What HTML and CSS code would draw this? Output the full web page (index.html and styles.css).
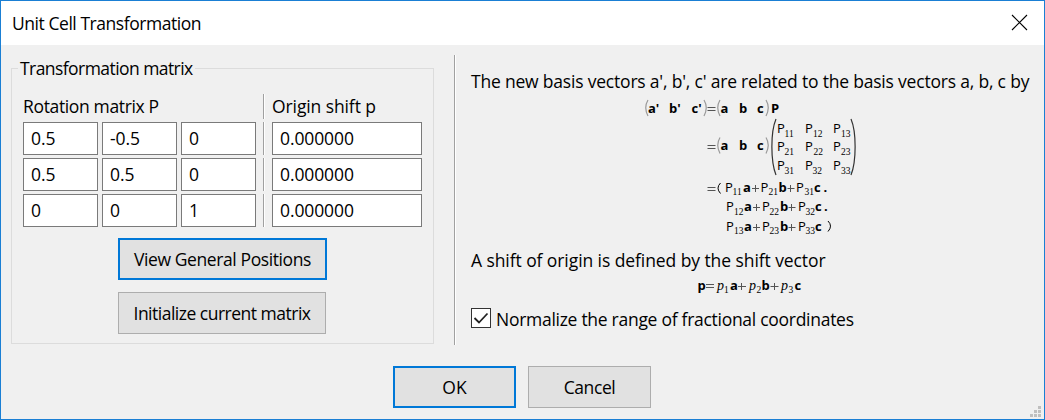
FILE: index.html
```html
<!DOCTYPE html>
<html lang="en">
<head>
<meta charset="utf-8">
<title>Unit Cell Transformation</title>
<link rel="stylesheet" href="styles.css">
</head>
<body>
<div class="dialog">
  <header class="titlebar">
    <span class="title">Unit Cell Transformation</span>
    <svg class="close" width="17" height="17" viewBox="0 0 17 17"><path d="M1 1L16 16M16 1L1 16"/></svg>
  </header>
  <main class="content">
    <fieldset class="group">
      <legend><span class="t-legend">Transformation matrix</span></legend>
      <div class="grid">
        <div class="label rot"><span class="t-rot">Rotation matrix P</span></div><i class="vline short"></i><div class="label"><span class="t-origin">Origin shift p</span></div>
        <input class="cell" value="0.5"><input class="cell" value="-0.5"><input class="cell" value="0"><i class="vline"></i><input class="cell shift" value="0.000000">
        <input class="cell" value="0.5"><input class="cell" value="0.5"><input class="cell" value="0"><i class="vline"></i><input class="cell shift" value="0.000000">
        <input class="cell" value="0"><input class="cell" value="0"><input class="cell" value="1"><i class="vline"></i><input class="cell shift" value="0.000000">
      </div>
      <div class="actions">
        <button class="btn view focus"><span class="t-view">View General Positions</span></button>
        <button class="btn init"><span class="t-init">Initialize current matrix</span></button>
      </div>
    </fieldset>
    <i class="divider"></i>
    <section class="info">
      <p class="line intro"><span class="t-intro">The new basis vectors a', b', c' are related to the basis vectors a, b, c by</span></p>
      <svg class="formula" width="220" height="142" viewBox="640 98 220 142">
        <g class="paren">
          <path d="M648 100Q643.5 107.500 648 116M704 100Q708.500 107.500 704 116M720 100Q715.500 107.500 720 116M766 100Q770.500 107.500 766 116"/>
          <path d="M720 137.500Q715.500 145 720 153.500M766 137.500Q770.500 145 766 153.500"/>
        </g>
        <path class="bigparen" d="M776 119C770.500 132 770.500 161 776 175M851 119C856.500 132 856.500 161 851 175"/>
        <g class="b">
          <text x="648" y="112.500">a'</text>
          <text x="669" y="112.500">b'</text>
          <text x="691.500" y="112.500">c'</text>
          <text x="720.500" y="112.500">a</text><text x="739" y="112.500">b</text><text x="757" y="112.500">c</text><text x="771" y="112.500">P</text>
          <text x="720.500" y="150">a</text><text x="739" y="150">b</text><text x="757" y="150">c</text>
          <text x="743" y="192">a</text><text x="778.500" y="192">b</text><text x="814" y="192">c</text><text x="823.500" y="192">.</text>
          <text x="744" y="211">a</text><text x="780" y="211">b</text><text x="815" y="211">c</text><text x="824" y="211">.</text>
          <text x="744" y="231">a</text><text x="780" y="231">b</text><text x="815" y="231">c</text>
        </g>
        <path class="op" d="M707.500 107.500h8M707.500 110.500h8M707.500 145.500h8M707.500 148.500h8M707.500 187.500h8M707.500 190.500h8M752 188.500h7M755.500 185v7M787.500 188.500h7M790.500 185v7M753 207.500h7M756.500 204v7M788.500 207.500h7M791.500 204v7M753 227.500h7M756.500 224v7M788.500 227.500h7M791.500 224v7"/>
        <path class="round" d="M720.500 183Q715.500 188 720.500 193.500M828 221Q833 226 828 231.500"/>
        <g class="r">
          <text x="777" y="133">P</text><text x="805" y="133">P</text><text x="833" y="133">P</text>
          <text x="777" y="151">P</text><text x="805" y="151">P</text><text x="833" y="151">P</text>
          <text x="777" y="170">P</text><text x="805" y="170">P</text><text x="833" y="170">P</text>
          <text x="725" y="192">P</text><text x="760.500" y="192">P</text><text x="796" y="192">P</text>
          <text x="726" y="211">P</text><text x="762" y="211">P</text><text x="798" y="211">P</text>
          <text x="726" y="231">P</text><text x="762" y="231">P</text><text x="798" y="231">P</text>
        </g>
        <g class="s">
          <text x="784.500" y="136.500">11</text><text x="813" y="136.500">12</text><text x="841" y="136.500">13</text>
          <text x="784.500" y="155">21</text><text x="813.500" y="155">22</text><text x="841" y="155">23</text>
          <text x="784.500" y="173.500">31</text><text x="812.500" y="173.500">32</text><text x="841" y="173.500">33</text>
          <text x="732.500" y="195">11</text><text x="768.500" y="195">21</text><text x="804.500" y="195">31</text>
          <text x="734" y="214.500">12</text><text x="769.500" y="214.500">22</text><text x="805.500" y="214.500">32</text>
          <text x="734" y="234">13</text><text x="769.500" y="234">23</text><text x="805.500" y="234">33</text>
        </g>
      </svg>
      <p class="line shiftline"><span class="t-shift">A shift of origin is defined by the shift vector</span></p>
      <svg class="formula2" width="120" height="20" viewBox="690 278 120 20">
        <g class="b"><text x="697.500" y="290">p</text><text x="730" y="290">a</text><text x="761.500" y="290">b</text><text x="794.500" y="290">c</text></g>
        <path class="op" d="M706 284.500h8M706 287.500h8M738 286.500h8M741.500 283v7M770.500 286.500h8M774.500 283v7"/>
        <g class="i"><text x="717" y="290">p</text><text x="749" y="290">p</text><text x="781" y="290">p</text></g>
        <g class="s"><text x="724" y="293">1</text><text x="756.500" y="293">2</text><text x="788.500" y="293">3</text></g>
      </svg>
      <label class="check">
        <svg width="20" height="20" viewBox="0 0 20 20"><rect x=".5" y=".5" width="19" height="19"/><path d="M3.500 10L8 14.500L16.500 5.500"/></svg>
        <span class="t-norm">Normalize the range of fractional coordinates</span>
      </label>
    </section>
  </main>
  <footer class="footer">
    <button class="btn foot focus"><span class="t-ok">OK</span></button>
    <button class="btn foot"><span class="t-cancel">Cancel</span></button>
    <svg class="grip" width="11" height="11" viewBox="0 0 11 11"><path d="M8 0h3v3h-3zM4 4h3v3h-3zM8 4h3v3h-3zM0 8h3v3h-3zM4 8h3v3h-3zM8 8h3v3h-3z"/></svg>
  </footer>
</div>
</body>
</html>
```
FILE: styles.css
```css
* { box-sizing: border-box; }
body { margin: 0; font: 17.5px/24px "Open Sans", "Noto Sans", sans-serif; color: #000; }
svg { overflow: visible; flex: none; }
.dialog { position: relative; width: 1045px; height: 420px; border: 1px solid #1a7fd4; background: #f0f0f0; display: flex; flex-direction: column; overflow: hidden; }
.titlebar { height: 44px; flex: none; background: #fff; display: flex; justify-content: space-between; align-items: center; padding: 0 16px 0 11px; }
.title, .line, .label, .btn, legend { white-space: nowrap; }
.title { letter-spacing: -.45px; }
.t-legend { letter-spacing: -.56px; }
.t-rot { letter-spacing: -.35px; }
.t-origin { letter-spacing: -.1px; }
.t-view { letter-spacing: -.4px; }
.t-init { letter-spacing: -.5px; }
.t-intro { letter-spacing: -.2px; }
.t-shift { letter-spacing: -.08px; }
.t-norm { letter-spacing: -.28px; }
.t-cancel { letter-spacing: -.4px; }
.close path { fill: none; stroke: #000; stroke-width: 1.1; }
.close { margin-top: -1px; }
.content { display: flex; height: 300px; flex: none; align-items: flex-start; }
.group { width: 423px; height: 289px; flex: none; margin: 10px 0 0 10px; padding: 0 0 0 11px; border: 1px solid #dcdcdc; min-width: 0; }
legend { margin-left: -5px; padding: 0 2px; height: 26px; line-height: 27px; }
.grid { display: grid; grid-template-columns: 75px 75px 75px 2px 150px; grid-template-rows: 25px 33px 33px 33px; column-gap: 4px; row-gap: 3px; margin-top: 13px; }
.label { line-height: 24px; }
.rot { grid-column: 1 / 4; }
.vline { width: 2px; height: 33px; margin-left: 3px; border-left: 1px solid #a0a0a0; border-right: 1px solid #fff; }
.vline.short { height: 25px; }
.grid .vline + .label, .shift { margin-left: 6px; }
.cell { width: 75px; height: 33px; border: 1px solid #7a7a7a; background: #fff; padding: 0 7px 2px; font: inherit; outline: 0; border-radius: 0; letter-spacing: -.1px; }
.shift { width: 150px; }
.actions { display: flex; flex-direction: column; align-items: flex-start; gap: 12px; margin: 11px 0 0 95px; }
.btn { height: 42px; background: #e1e1e1; border: 1px solid #adadad; font: inherit; color: inherit; padding: 0; border-radius: 0; }
.focus { border: 2px solid #0078d7; }
.view { width: 209px; }
.init { width: 208px; }
.divider { width: 2px; height: 290px; flex: none; margin: 10px 0 0 20px; border-left: 1px solid #a0a0a0; border-right: 1px solid #fff; }
.info { margin-left: 15px; padding-top: 24px; display: flex; flex-direction: column; align-items: flex-start; }
.line { margin: 0; height: 24px; }
.formula { display: block; margin: 5px 0 0 169px; }
.shiftline { margin-top: 8px; line-height: 25px; }
.formula2 { display: block; margin: 6px 0 0 219px; }
.check { display: flex; height: 20px; margin-top: 10px; gap: 5px; align-items: center; white-space: nowrap; }
.t-norm { padding-top: 2px; }
.check rect { fill: #fff; stroke: #333; }
.check path { fill: none; stroke: #222; stroke-width: 1.8; }
.paren path { fill: none; stroke: #999; stroke-width: 1.2; }
.bigparen { fill: none; stroke: #333; stroke-width: 1.2; }
.round { fill: none; stroke: #000; stroke-width: 1; }
.op { fill: none; stroke: #555; stroke-width: 1; }
.b text { font: bold 13px "Open Sans", sans-serif; }
.r text { font: 13px "Open Sans", sans-serif; }
.s text { font: 9.5px "Liberation Serif", serif; }
.i text { font: italic 14px "Liberation Serif", serif; }
.footer { flex: 1; display: flex; gap: 12px; padding: 21px 0 0 392px; }
.foot { width: 123px; }
.grip { position: absolute; right: 3px; bottom: 2px; fill: #bfbfbf; }
```
